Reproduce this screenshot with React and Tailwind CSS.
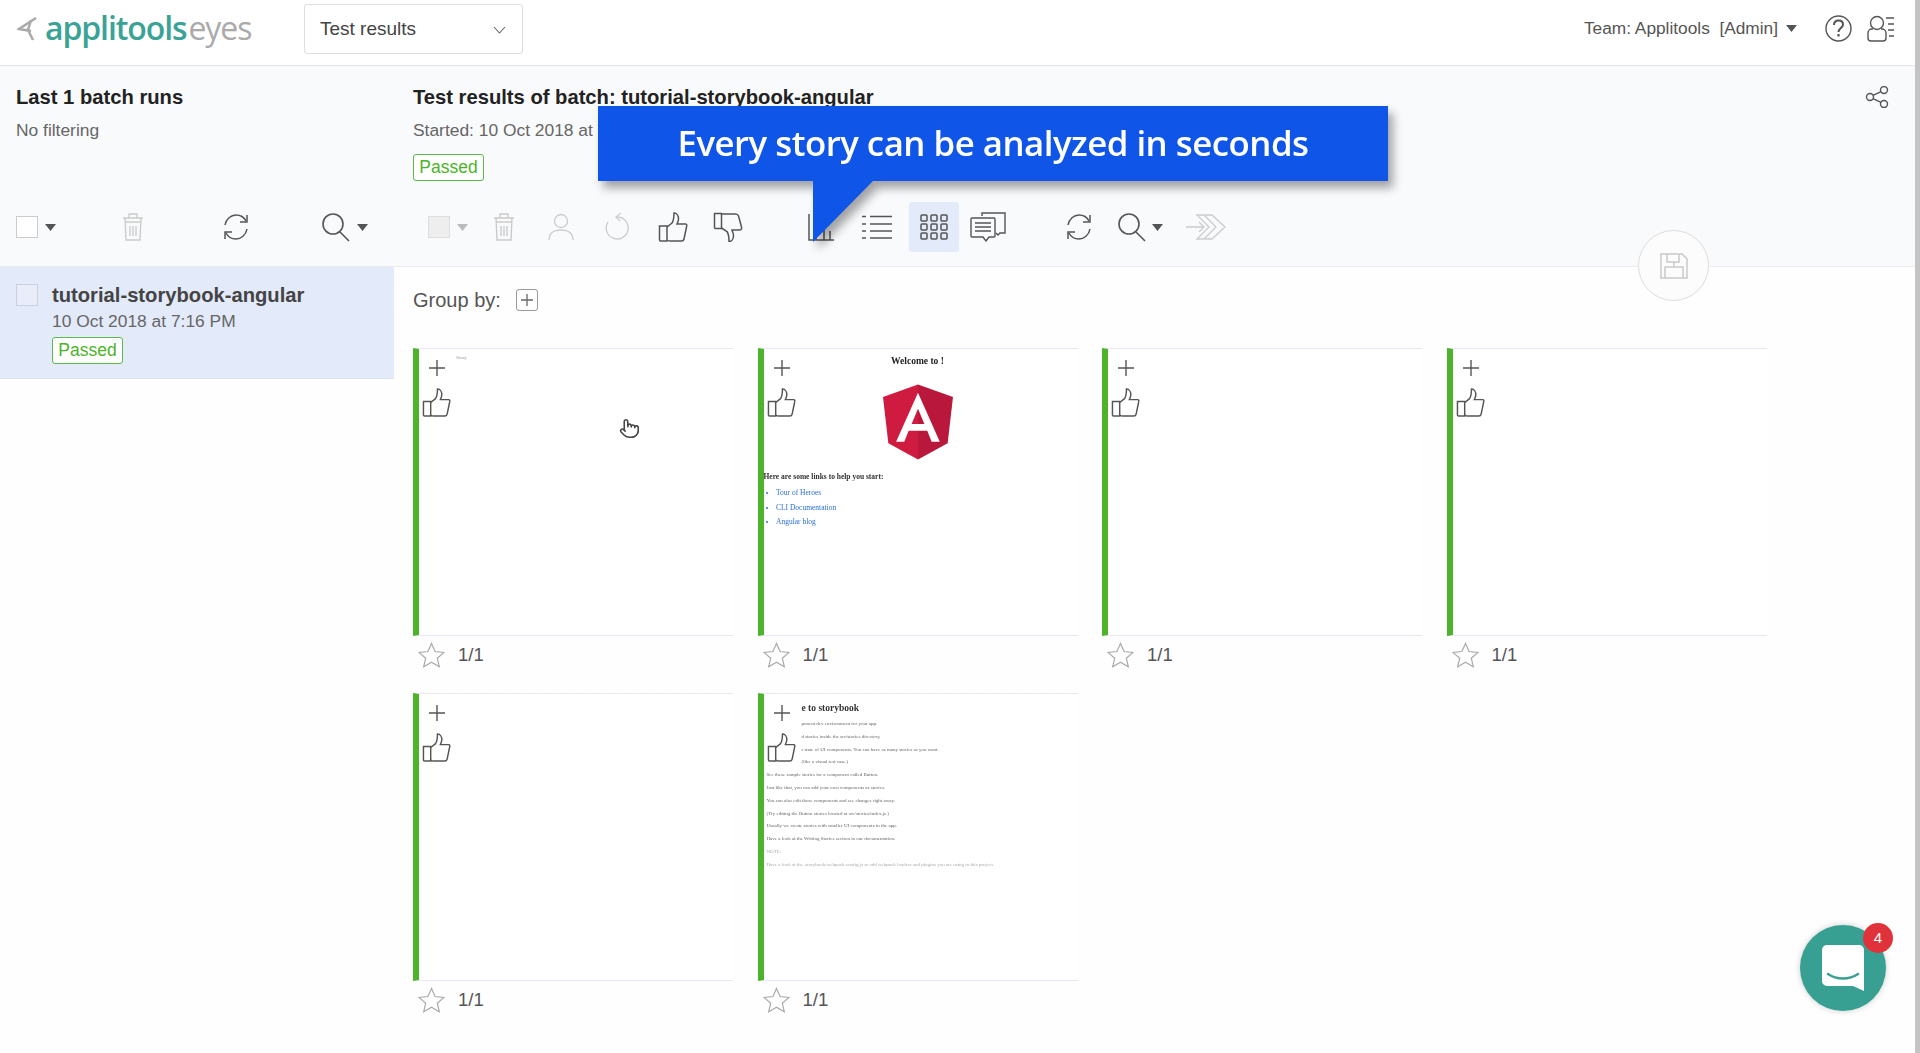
import { Pointer } from "lucide-react"

const sans = { fontFamily: '"Liberation Sans", Arial, sans-serif' }

const Icon = ({ w = 28, h = 28, vb = "0 0 28 28", color = "#555", sw = 1.5, className = "", children }) => (
  <svg width={w} height={h} viewBox={vb} fill="none" stroke={color} strokeWidth={sw} className={`shrink-0 ${className}`}>
    {children}
  </svg>
)

const Caret = ({ color = "#555", className = "" }) => (
  <svg width="11" height="7" viewBox="0 0 11 7" className={`shrink-0 ${className}`}>
    <path d="M0 0h11L5.500 7z" fill={color} />
  </svg>
)

const Box = ({ color = "#ccc", className = "" }) => (
  <div className={`w-[22px] h-[22px] border shrink-0 bg-white ${className}`} style={{ borderColor: color }} />
)

const Trash = ({ color = "#ccc", className = "" }) => (
  <Icon w={22} h={30} vb="0 0 22 30" color={color} sw={1.400} className={className}>
    <path d="M1 6h20M7 6V2h8v4M3 6l1 22h14l1-22" />
    <path d="M3 10h16M8 14v10M11 14v10M14 14v10" />
  </Icon>
)

const Refresh = ({ className = "" }) => (
  <Icon w={28} h={30} vb="0 0 28 30" color="#555" sw={1.500} className={className}>
    <path d="M3 13C4 7 9 3 14 3c4 0 8 2 10 6" />
    <path d="M25 3v7h-7" />
    <path d="M25 17c-1 6-6 10-11 10-4 0-8-2-10-6" />
    <path d="M3 27v-7h7" />
  </Icon>
)

const Search = ({ className = "" }) => (
  <Icon w={28} h={30} vb="0 0 28 30" color="#555" sw={1.600} className={className}>
    <circle cx="11" cy="12" r="10" />
    <path d="M18 20l9 9" />
  </Icon>
)

const ThumbUp = ({ size = 30, className = "" }) => (
  <Icon w={size} h={size} vb="0 0 30 30" color="#555" sw={1.500} className={className}>
    <path d="M1.500 14h7.500v15h-6.500a1 1 0 0 1-1-1z" />
    <path d="M9 15l5-4c2-3 2-6 2-10 3 0 4.500 3 4.500 6 0 2-1 3.500-1.500 5h8.500c1.500 0 1.500 1.500 1 3l-2.500 12c-.3 1.500-1 2-2.500 2H12c-1.500 0-3-1-3-1" />
  </Icon>
)

const ThumbDown = ({ className = "" }) => (
  <Icon w={30} h={30} vb="0 0 30 30" color="#555" sw={1.500} className={className}>
    <path d="M1.500 1.500h7v15h-6a1 1 0 0 1-1-1z" />
    <path d="M8.500 2h14c1.500 0 2.500.5 3 2l3 11c.3 1.500 0 3-1.500 3h-8c.5 2 1.500 3.500 1.500 5.500 0 3-1.500 6-4.500 6 0-4 0-7-2-10l-5.500-3.500" />
  </Icon>
)

const Star = () => (
  <svg width="27" height="26" viewBox="0 0 27 26" fill="none" stroke="#aaa" strokeWidth="1.200" className="shrink-0">
    <path d="M13.500 1.500l3.600 8 8.900.9-6.700 5.800 2 8.500-7.800-4.500-7.800 4.500 2-8.500L1 10.400l8.900-.9z" />
  </svg>
)

const PlusMark = () => (
  <Icon w={18} h={18} vb="0 0 18 18" color="#555" sw={1.400}>
    <path d="M9 1v16M1 9h16" />
  </Icon>
)

const Passed = ({ className = "" }) => (
  <div className={`w-[71px] h-[27px] rounded-[3px] border border-[#5cb94a] bg-white text-[#4db32b] text-[17.500px] flex items-center justify-center ${className}`}>
    Passed
  </div>
)

const AngularLogo = () => (
  <svg width="70" height="76" viewBox="31.900 30 186.200 200">
    <polygon points="125,30 31.900,63.200 46.100,186.300 125,230" fill="#cf1b3f" />
    <polygon points="125,30 125,230 203.900,186.300 218.100,63.200" fill="#b9173b" />
    <path d="M125 52.100L66.800 182.600h21.700l11.700-29.200h49.400l11.700 29.200h21.700zM142 135.400h-34l17-40.900z" fill="#fff" />
  </svg>
)

const WelcomeShot = () => (
  <div className="pt-[6px] font-['Liberation_Serif',serif] text-[7.500px] text-[#333] blur-[0.3px]">
    <div className="pr-[6px] text-center font-bold text-[9.500px] leading-[12px] text-[#222]">Welcome to !</div>
    <div className="pr-[6px] flex justify-center mt-[17px]">
      <AngularLogo />
    </div>
    <div className="mt-[12px] font-bold leading-[10px]">Here are some links to help you start:</div>
    <ul className="mt-[4px] pl-[2px] list-disc list-inside text-[#2a6fd6] leading-[14.700px]">
      <li>Tour of Heroes</li>
      <li>CLI Documentation</li>
      <li>Angular blog</li>
    </ul>
  </div>
)

const storyLines = [
  ["ponent dev environment for your app.", true],
  ["d stories inside the src/stories directory.", true],
  ["r state of UI components. You can have as many stories as you want.", true],
  ["(like a visual test case.)", true],
  ["See these sample stories for a component called Button.", false],
  ["Just like that, you can add your own components as stories.", false],
  ["You can also edit those components and see changes right away.", false],
  ["(Try editing the Button stories located at src/stories/index.js.)", false],
  ["Usually we create stories with smaller UI components in the app.", false],
  ["Have a look at the Writing Stories section in our documentation.", false],
]

const StoryShot = () => (
  <div className="pt-[7px] font-['Liberation_Serif',serif] text-[5px] text-[#666] leading-[12.800px] blur-[0.3px]">
    <div className="pl-[38px] font-bold text-[9.500px] text-[#333] leading-[14px] mb-[3px]">e to storybook</div>
    {storyLines.map(([line, indent]) => (
      <div key={line} className={indent ? "pl-[38px] whitespace-nowrap" : "pl-[3px] whitespace-nowrap"}>
        {line}
      </div>
    ))}
    <div className="pl-[3px] text-[#aaa]">NOTE:</div>
    <div className="pl-[3px] text-[#aaa] text-[5px] whitespace-nowrap">
      Have a look at the .storybook/webpack.config.js to add webpack loaders and plugins you are using in this project.
    </div>
  </div>
)

const Card = ({ children }) => (
  <div>
    <div className="relative h-[288px] bg-white border-l-[6px] border-l-[#4db32b] border-t border-b border-[#e6e9f2]">
      <div className="absolute left-[9px] top-[10px]">
        <PlusMark />
      </div>
      <div className="absolute left-[3px] top-[39px]">
        <ThumbUp size={29} />
      </div>
      {children}
    </div>
    <div className="flex items-center h-[37px] pl-[5px] text-[18.500px] text-[#555]">
      <Star />
      <span className="ml-[13px]">1/1</span>
    </div>
  </div>
)

export default function App() {
  return (
    <div className="relative h-[1053px] overflow-hidden bg-[#fefefe] text-[#444]" style={sans}>
      {/* top bar */}
      <div className="h-[66px] flex items-center pb-[8px] bg-white border-b border-[#e4e4e4]">
        <svg width="20" height="24" viewBox="0 0 20 24" fill="none" stroke="#aaa" strokeWidth="2.500" className="ml-[17px] shrink-0">
          <path d="M19 1L2 12l12 2" />
          <path d="M14 3l-3 10 5 10" />
        </svg>
        <div className="ml-[8px] w-[257px] -mt-[2px] flex items-baseline text-[32px] tracking-[-1.100px] font-['Open_Sans',sans-serif] leading-none">
          <span className="text-[#3aa396] font-semibold">applitools</span>
          <span className="text-[#aaa] ml-[2px]">eyes</span>
        </div>
        <div className="ml-[2px] w-[219px] h-[50px] border border-[#ddd] rounded-[3px] flex items-center pl-[15px] pr-[16px] pt-[2px] text-[19px] text-[#444]">
          Test results
          <svg width="13" height="8" viewBox="0 0 13 8" fill="none" stroke="#666" strokeWidth="1.100" className="ml-auto">
            <path d="M1 1l5.500 6L12 1" />
          </svg>
        </div>
        <div className="ml-auto flex items-center text-[17.300px] text-[#555]">
          <span className="whitespace-pre">Team: Applitools  [Admin]</span>
          <Caret className="ml-[8px]" />
        </div>
        <Icon w={27} h={27} vb="0 0 27 27" color="#555" sw={1.400} className="ml-[28px]">
          <circle cx="13.500" cy="13.500" r="12.500" />
          <path d="M9 10c0-3 2-4.500 4.500-4.500S18 7 18 9.500c0 3.500-4.500 3.500-4.500 7.500" strokeWidth="2" />
          <path d="M13.500 19v2.500" strokeWidth="2.200" />
        </Icon>
        <Icon w={29} h={27} vb="0 0 29 27" color="#555" sw={1.400} className="ml-[15px] mr-[24px]">
          <circle cx="10" cy="8" r="6.500" />
          <path d="M6 14H5a4 4 0 0 0-4 4v5a3 3 0 0 0 3 3h12a3 3 0 0 0 3-3v-5a4 4 0 0 0-4-4h-1" />
          <path d="M19 3h8M21 9h6M21 15h6M22 21h5" />
        </Icon>
      </div>

      {/* batch header and toolbars */}
      <div className="h-[201px] bg-[#f9fafc] border-b border-[#e9ebf0]">
        <div className="h-[136px] flex">
          <div className="w-[413px] pl-[16px] pt-[19px] shrink-0">
            <div className="text-[20.200px] leading-[24px] font-bold text-[#222]">Last 1 batch runs</div>
            <div className="mt-[9px] text-[17.400px] leading-[24px] text-[#666]">No filtering</div>
          </div>
          <div className="pt-[19px]">
            <div className="text-[20.200px] leading-[24px] font-bold text-[#222]">Test results of batch: tutorial-storybook-angular</div>
            <div className="mt-[9px] text-[17.400px] leading-[24px] text-[#666]">Started: 10 Oct 2018 at 7:16 PM</div>
            <Passed className="mt-[12px]" />
          </div>
          <div className="ml-auto pt-[20px] pr-[31px]">
            <Icon w={24} h={22} vb="0 0 24 22" color="#555" sw={1.400}>
              <circle cx="19" cy="4" r="3.500" />
              <circle cx="19" cy="18" r="3.500" />
              <circle cx="5" cy="11" r="3.500" />
              <path d="M8 9.300l8-3.700M8 12.700l8 3.700" />
            </Icon>
          </div>
        </div>
        <div className="h-[50px] flex items-center pl-[16px]">
          <Box color="#ccc" />
          <Caret className="ml-[7px]" />
          <Trash className="ml-[66px]" />
          <Refresh className="ml-[78px]" />
          <Search className="ml-[72px]" />
          <Caret className="ml-[7px]" />
          <Box color="#ddd" className="ml-[60px] !bg-[#eeeeee]" />
          <Caret color="#bbb" className="ml-[7px]" />
          <Trash className="ml-[25px]" />
          <Icon w={26} h={28} vb="0 0 26 28" color="#ccc" sw={1.300} className="ml-[33px]">
            <circle cx="13" cy="8" r="6.500" />
            <path d="M1 27c0-7 5-10 12-10s12 3 12 10" />
          </Icon>
          <Icon w={26} h={30} vb="0 0 26 30" color="#ccc" sw={1.300} className="ml-[31px]">
            <path d="M12 5a11 11 0 1 1-9 5" />
            <path d="M16 1l-5 4 4 4" />
          </Icon>
          <ThumbUp className="ml-[27px]" />
          <ThumbDown className="ml-[25px]" />
          <Icon w={27} h={28} vb="0 0 27 28" color="#555" sw={1.500} className="ml-[65px]">
            <path d="M1 1v26h25M8 27V16M16 27V10M22 27V18" />
          </Icon>
          <Icon w={30} h={24} vb="0 0 30 24" color="#555" sw={1.500} className="ml-[27px]">
            <path d="M0 1.500h4M8 1.500h22M0 9h4M8 9h22M0 16h4M8 16h22M0 23h4M8 23h22" />
          </Icon>
          <div className="ml-[17px] w-[50px] h-[50px] bg-[#e3eafa] rounded-[3px] flex items-center justify-center">
            <Icon w={28} h={26} vb="0 0 28 26" color="#555" sw={1.500}>
              <rect x="1" y="1" width="6" height="6" rx="1" />
              <rect x="11" y="1" width="6" height="6" rx="1" />
              <rect x="21" y="1" width="6" height="6" rx="1" />
              <rect x="1" y="10" width="6" height="6" rx="1" />
              <rect x="11" y="10" width="6" height="6" rx="1" />
              <rect x="21" y="10" width="6" height="6" rx="1" />
              <rect x="1" y="19" width="6" height="6" rx="1" />
              <rect x="11" y="19" width="6" height="6" rx="1" />
              <rect x="21" y="19" width="6" height="6" rx="1" />
            </Icon>
          </div>
          <Icon w={36} h={30} vb="0 0 36 30" color="#555" sw={1.400} className="ml-[11px]">
            <path d="M12 4V1h23v20h-5l-2 2-2-2" />
            <path d="M2 6h22a1 1 0 0 1 1 1v17a1 1 0 0 1-1 1h-5l-3 4-3-4H2a1 1 0 0 1-1-1V7a1 1 0 0 1 1-1z" />
            <path d="M5 11h16M5 15h16M5 19h16" />
          </Icon>
          <Refresh className="ml-[59px]" />
          <Search className="ml-[25px]" />
          <Caret className="ml-[6px]" />
          <Icon w={41} h={26} vb="0 0 41 26" color="#ccc" sw={1.300} className="ml-[22px]">
            <path d="M1 13h18M14 8l5 5-5 5" />
            <path d="M12 1h7l12 12-12 12h-7l12-12zM20 1h7l13 12-13 12h-7" />
          </Icon>
        </div>
      </div>

      {/* list and thumbnails */}
      <div className="flex">
        <div className="w-[394px] shrink-0">
          <div className="h-[112px] bg-[#e3eafa] border-b border-[#dde3f0] pl-[16px] pt-[17px] flex">
            <Box color="#c9d0e0" className="!bg-[#e8edf9]" />
            <div className="ml-[14px]">
              <div className="text-[20.200px] leading-[22px] font-bold text-[#444]">tutorial-storybook-angular</div>
              <div className="mt-[4px] text-[17.400px] leading-[22px] text-[#666]">10 Oct 2018 at 7:16 PM</div>
              <Passed className="mt-[5px]" />
            </div>
          </div>
        </div>
        <div className="pl-[19px]">
          <div className="h-[81px] pt-[21px] flex items-start">
            <span className="text-[20px] leading-[24px] text-[#555]">Group by:</span>
            <div className="ml-[15px] mt-px w-[22px] h-[22px] border border-[#999] rounded-[3px] flex items-center justify-center text-[#555]">
              <svg width="12" height="12" viewBox="0 0 12 12" stroke="#666" strokeWidth="1.300">
                <path d="M6 0v12M0 6h12" />
              </svg>
            </div>
          </div>
          <div className="grid grid-cols-[repeat(4,320px)] gap-x-[24.500px] gap-y-[20px]">
            <Card>
              <div className="pl-[37px] pt-[5px] text-[5px] text-[#999] font-['Liberation_Serif',serif]">Story</div>
            </Card>
            <Card>
              <WelcomeShot />
            </Card>
            <Card />
            <Card />
            <Card />
            <Card>
              <StoryShot />
            </Card>
          </div>
        </div>
      </div>

      {/* mouse pointer */}
      <Pointer size={21} color="#444" fill="#fff" strokeWidth={1.800} className="absolute left-[619px] top-[418px]" />

      {/* save button sits across the toolbar edge */}
      <div className="absolute left-[1638px] top-[230px] w-[71px] h-[71px] rounded-full border border-[#ddd] bg-[#fcfcfd] flex items-center justify-center">
        <Icon w={28} h={26} vb="0 0 28 26" color="#c9c9c9" sw={1.500}>
          <path d="M1 1h21l5 5v19H1zM7 1v8h12V1M14 9v5M5 25V14h18v11" />
        </Icon>
      </div>

      {/* tutorial callout */}
      <div className="absolute left-[598px] top-[106px] drop-shadow-[5px_7px_5px_rgba(0,0,0,0.35)]">
        <div className="w-[790px] h-[75px] bg-[#0f55e8] flex items-center justify-center text-white text-[34.800px] font-semibold font-['Open_Sans',sans-serif] tracking-[-0.500px]">
          Every story can be analyzed in seconds
        </div>
        <div className="ml-[215px] w-[60px] h-[61px] bg-[#0f55e8] [clip-path:polygon(0_0,100%_0,0_100%)]" />
      </div>

      {/* chat launcher */}
      <div className="absolute left-[1800px] top-[925px] w-[86px] h-[86px] rounded-full bg-[#38a092] shadow-[0_0_6px_rgba(0,0,0,0.2)] flex items-center justify-center">
        <svg width="42" height="46" viewBox="0 0 42 46">
          <path d="M5 0h32a5 5 0 0 1 5 5v41l-11-5H5a5 5 0 0 1-5-5V5a5 5 0 0 1 5-5z" fill="#fff" />
          <path d="M6 29c9 6 21 6 30 0" fill="none" stroke="#38a092" strokeWidth="2.500" strokeLinecap="round" />
        </svg>
      </div>
      <div className="absolute left-[1863px] top-[923px] w-[30px] h-[30px] rounded-full bg-[#e0323a] text-white text-[15px] flex items-center justify-center">
        4
      </div>

      {/* scrollbar */}
      <div className="absolute right-0 top-0 w-[5px] h-full bg-[#c4c4c4]" />
    </div>
  )
}
